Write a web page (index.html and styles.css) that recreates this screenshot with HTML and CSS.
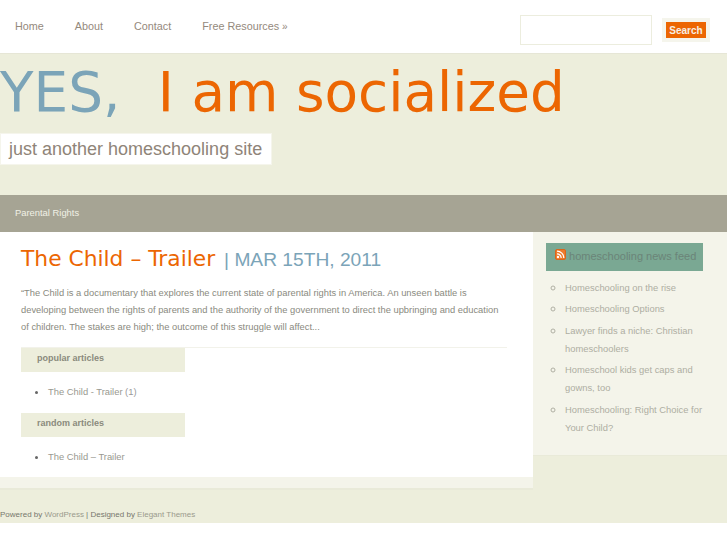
FILE: index.html
```html
<!DOCTYPE html>
<html lang="en">
<head>
    <meta charset="UTF-8">
    <title>YES, I am socialized</title>
    <link rel="stylesheet" href="styles.css">
</head>
<body>
    <div class="top-bar">
        <ul class="top-nav">
            <li><a href="#">Home</a></li>
            <li><a href="#">About</a></li>
            <li><a href="#">Contact</a></li>
            <li><a href="#">Free Resources <span class="more">»</span></a></li>
        </ul>
        <form class="search">
            <input class="search-input" type="text">
            <span class="search-frame"><button class="search-btn" type="button">Search</button></span>
        </form>
    </div>

    <div class="header">
        <h1 class="logo"><span class="logo-yes">YES,</span> <span class="logo-rest">I am socialized</span></h1>
        <div class="tagline">just another homeschooling site</div>
    </div>

    <div class="cat-nav"><a href="#">Parental Rights</a></div>

    <div class="content">
        <div class="main">
            <div class="main-inner">
                <h2 class="post-title"><a href="#">The Child – Trailer</a> <span class="post-date">| MAR 15TH, 2011</span></h2>
                <p class="post-text">“The Child is a documentary that explores the current state of parental rights in America. An unseen battle is developing between the rights of parents and the authority of the government to direct the upbringing and education of children. The stakes are high; the outcome of this struggle will affect...</p>
                <div class="post-footer">
                    <h4 class="box-title">popular articles</h4>
                    <ul class="box-list">
                        <li><a href="#">The Child - Trailer</a> (1)</li>
                    </ul>
                    <h4 class="box-title">random articles</h4>
                    <ul class="box-list">
                        <li><a href="#">The Child – Trailer</a></li>
                    </ul>
                </div>
            </div>
        </div>
        <div class="sidebar">
            <h3 class="feed-title">
                <svg class="rss" width="11" height="11" viewBox="0 0 11 11">
                    <rect x="0.5" y="0.5" width="10" height="10" rx="1.5" fill="#ee7b2a" stroke="#d9661c"/>
                    <circle cx="3" cy="8" r="1.2" fill="#fff"/>
                    <path d="M2 4.8a4.2 4.2 0 0 1 4.2 4.2M2 2.2a6.8 6.8 0 0 1 6.8 6.8" fill="none" stroke="#fff" stroke-width="1.2"/>
                </svg>
                homeschooling news feed
            </h3>
            <ul class="feed-list">
                <li><a href="#">Homeschooling on the rise</a></li>
                <li><a href="#">Homeschooling Options</a></li>
                <li><a href="#">Lawyer finds a niche: Christian homeschoolers</a></li>
                <li><a href="#">Homeschool kids get caps and gowns, too</a></li>
                <li><a href="#">Homeschooling: Right Choice for Your Child?</a></li>
            </ul>
        </div>
    </div>

    <div class="footer">
        <p>Powered by <a href="#">WordPress</a> | Designed by <a href="#">Elegant Themes</a></p>
    </div>
</body>
</html>
```

FILE: styles.css
```css
html {
    background-color: #fff;
}
body {
    margin: 0;
    font-family: 'Liberation Sans', Arial, sans-serif;
    color: #8a8a80;
}
a {
    text-decoration: none;
}
ul, h1, h2, h3, h4, p {
    margin: 0;
    padding: 0;
}
.top-bar {
    height: 53px;
    display: flex;
    justify-content: space-between;
    background-color: #fff;
    border-bottom: 1px solid #e6e6d6;
}
.top-nav {
    list-style: none;
    display: flex;
    gap: 31px;
    padding: 20px 0 0 15px;
    font-size: 10.8px;
    line-height: 13px;
}
.top-nav a {
    color: #94897c;
}
.more {
    font-size: 10px;
}
.search {
    display: flex;
    gap: 10px;
    padding: 15px 17px 0 0;
}
.search-input {
    width: 130px;
    height: 28px;
    padding: 0;
    border: 1px solid #ecedde;
    background-color: #fff;
}
.search-frame {
    align-self: flex-start;
    margin-top: 3px;
    padding: 4px;
    background-color: #f5f5ec;
}
.search-btn {
    display: block;
    width: 40px;
    height: 16px;
    padding: 0;
    border: 0;
    background-color: #ec6602;
    color: #f6efe4;
    font-family: 'Liberation Sans', Arial, sans-serif;
    font-size: 10px;
    font-weight: bold;
}
.header {
    height: 141px;
    background-color: #edeedc;
    overflow: hidden;
}
.logo {
    font-family: 'DejaVu Sans', Verdana, sans-serif;
    font-size: 54.85px;
    font-weight: normal;
    line-height: 65px;
    margin-top: 6px;
    white-space: pre;
}
.logo-yes {
    color: #7ba4b8;
    margin-right: 20px;
}
.logo-rest {
    color: #ec6602;
}
.tagline {
    display: inline-block;
    margin-top: 8px;
    padding: 0 9px 0 8px;
    border: 1px solid #f5f5ec;
    background-color: #fff;
    font-size: 18px;
    line-height: 30px;
    color: #8f8478;
}
.cat-nav {
    height: 37px;
    background-color: #a6a494;
    padding-left: 15px;
    font-size: 9.4px;
    line-height: 36px;
}
.cat-nav a {
    color: #f1f1e6;
}
.content {
    display: flex;
    align-items: flex-start;
    background-color: #edeedc;
}
.main {
    width: 533px;
    margin-bottom: 2px;
    background-color: #fff;
    border-bottom: 11px solid #f4f4ea;
    box-shadow: 0 2px 0 #e9ead9;
}
.main-inner {
    height: 245px;
    padding-left: 21px;
    padding-right: 26px;
}
.post-title {
    padding-top: 13px;
    font-family: 'DejaVu Sans', Verdana, sans-serif;
    font-size: 21.8px;
    font-weight: normal;
    line-height: 28px;
}
.post-title a {
    color: #ec6602;
}
.post-date {
    margin-left: 2px;
    font-family: 'Liberation Sans', Arial, sans-serif;
    font-size: 19.2px;
    color: #7ba4b8;
}
.post-text {
    margin-top: 11px;
    padding-bottom: 11px;
    border-bottom: 1px solid #f2f2ea;
    font-size: 9.35px;
    line-height: 17px;
    color: #8a8a80;
}
.box-title {
    width: 148px;
    height: 24px;
    padding-left: 16px;
    background-color: #edeedc;
    font-size: 9px;
    line-height: 20px;
    color: #8a8a7c;
}
.box-list {
    padding: 12px 0 14px 27px;
    font-size: 9.4px;
    line-height: 14px;
    color: #999;
}
.box-list li::marker {
    color: #666;
    font-size: 11px;
}
.box-list a {
    color: #999990;
}
.sidebar {
    width: 194px;
    height: 223px;
    box-sizing: border-box;
    padding: 11px 24px 0 13px;
    background-color: #f4f4ea;
    box-shadow: 0 1px 0 #e9ead9;
}
.feed-title {
    height: 28px;
    padding-left: 9px;
    background-color: #7aa893;
    font-size: 11px;
    font-weight: normal;
    line-height: 27px;
    color: #6b8478;
    white-space: nowrap;
}
.rss {
    vertical-align: 0;
}
.feed-list {
    list-style: circle;
    padding: 6.5px 0 0 19px;
    font-size: 9.4px;
    line-height: 18px;
    color: #b0b0a4;
}
.feed-list li {
    padding-bottom: 2.5px;
}
.feed-list li::marker {
    font-size: 12px;
}
.feed-list a {
    color: #aeaea2;
}
.footer {
    height: 33px;
    background-color: #edeedc;
    font-size: 8px;
    line-height: 50px;
    color: #77776c;
}
.footer a {
    color: #9a9a8c;
}
```
